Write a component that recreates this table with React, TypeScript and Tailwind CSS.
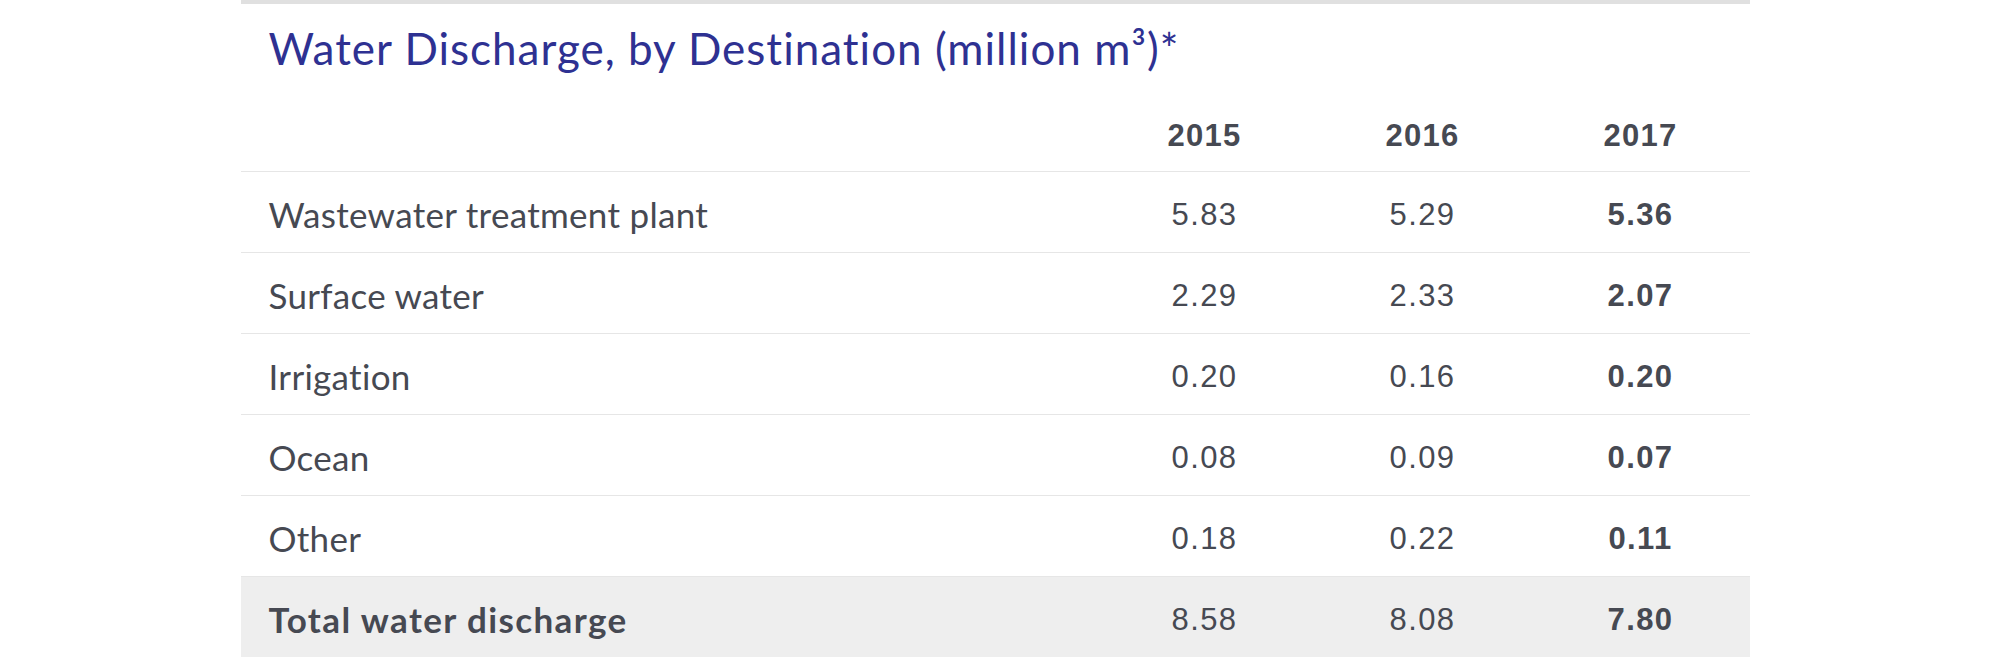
import React from "react";

const rows = [
  { label: "Wastewater treatment plant", a: "5.83", b: "5.29", c: "5.36" },
  { label: "Surface water", a: "2.29", b: "2.33", c: "2.07" },
  { label: "Irrigation", a: "0.20", b: "0.16", c: "0.20" },
  { label: "Ocean", a: "0.08", b: "0.09", c: "0.07" },
  { label: "Other", a: "0.18", b: "0.22", c: "0.11" },
];

const labelFont = "font-['Lato','Noto_Sans',sans-serif]";
const numFont = "font-['Liberation_Sans','Arial',sans-serif]";

export default function App() {
  return (
    <div className="w-full bg-white">
      <div className="w-[1509px] mx-auto">
        <div className="h-[4px] bg-[#e0e0e0]" />
        <div className="h-[86px] flex items-center pl-[28px] pt-[2px]">
          <h2 className={`${labelFont} text-[44px] tracking-[1px] text-[#2e3192] leading-none`}>
            Water Discharge, by Destination (million m³)*
          </h2>
        </div>
        <div className="h-[81px] grid grid-cols-[1fr_218px_218px_218px] items-center pt-[12px] text-[#464952]">
          <div />
          <div className={`${numFont} text-center font-bold text-[31px] tracking-[1.2px]`}>2015</div>
          <div className={`${numFont} text-center font-bold text-[31px] tracking-[1.2px]`}>2016</div>
          <div className={`${numFont} text-center font-bold text-[31px] tracking-[1.2px]`}>2017</div>
        </div>
        {rows.map((r) => (
          <div
            key={r.label}
            className="h-[81px] grid grid-cols-[1fr_218px_218px_218px] items-center border-t border-[#e6e6e6] text-[#464952]"
          >
            <div className={`${labelFont} pl-[28px] text-[35px] tracking-[0.3px] pt-[4px]`}>{r.label}</div>
            <div className={`${numFont} text-center text-[31px] tracking-[1.4px] pt-[6px]`}>{r.a}</div>
            <div className={`${numFont} text-center text-[31px] tracking-[1.4px] pt-[6px]`}>{r.b}</div>
            <div className={`${numFont} text-center text-[31px] tracking-[1.4px] font-bold pt-[6px]`}>{r.c}</div>
          </div>
        ))}
        <div className="h-[81px] grid grid-cols-[1fr_218px_218px_218px] items-center border-t border-[#e6e6e6] bg-[#eeeeee] text-[#464952]">
          <div className={`${labelFont} pl-[28px] text-[35px] tracking-[1.4px] font-bold pt-[4px]`}>Total water discharge</div>
          <div className={`${numFont} text-center text-[31px] tracking-[1.4px] pt-[6px]`}>8.58</div>
          <div className={`${numFont} text-center text-[31px] tracking-[1.4px] pt-[6px]`}>8.08</div>
          <div className={`${numFont} text-center text-[31px] tracking-[1.4px] font-bold pt-[6px]`}>7.80</div>
        </div>
      </div>
    </div>
  );
}
